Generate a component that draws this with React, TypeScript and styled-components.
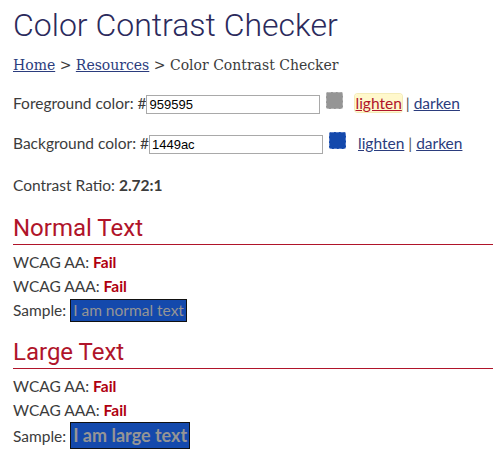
import styled, { createGlobalStyle } from "styled-components";

const GlobalStyle = createGlobalStyle`
  body {
    margin: 0;
    background: #fff;
    font-family: Lato, "Liberation Sans", sans-serif;
    color: #3c3c3c;
  }
`;

const Page = styled.main`
  padding: 0 0 0 13px;
`;

const Title = styled.h1`
  margin: 0;
  padding-top: 6px;
  font-family: Roboto, sans-serif;
  font-weight: 300;
  font-size: 32px;
  line-height: 38px;
  color: #2b2a5c;
`;

const Crumbs = styled.nav`
  margin-top: 13px;
  font-family: "DejaVu Serif", serif;
  font-size: 14px;
  color: #3c3c3c;
  a {
    color: #2b3c7d;
  }
`;

const FieldRow = styled.div<{ $top: number }>`
  display: flex;
  align-items: center;
  margin-top: ${(p) => p.$top}px;
  font-size: 15.5px;
  height: 22px;
`;

const HexInput = styled.input`
  width: 168px;
  height: 15px;
  padding: 1px 2px;
  margin: 3px 0 0 0;
  border: 1px solid #a9a9a9;
  font-family: "Liberation Sans", Arial, sans-serif;
  font-size: 13px;
  color: #000;
`;

const Swatch = styled.span<{ $color: string; $edge: string }>`
  width: 15px;
  height: 15px;
  margin: -6px 0 0 6px;
  border-radius: 2px;
  background: ${(p) => p.$color};
  border: 1px dashed ${(p) => p.$edge};
`;

const Links = styled.span`
  margin-left: 12px;
  color: #555;
  a {
    color: #2b3c7d;
  }
`;

const Focused = styled.a`
  && {
    color: #b0142a;
  }
  background: #fff8cc;
  border-radius: 3px;
  box-shadow: 0 0 0 1px #f4ecb8;
`;

const Ratio = styled.p`
  margin: 22px 0 0;
  font-size: 15.5px;
  b {
    font-weight: 700;
  }
`;

const Result = styled.section`
  margin-top: 19px;
  & + & {
    margin-top: 15px;
  }
`;

const SectionHead = styled.h2`
  margin: 0;
  font-family: Roboto, sans-serif;
  font-weight: 400;
  font-size: 24px;
  line-height: 31px;
  color: #b0142a;
  border-bottom: 1px solid #b0142a;
`;

const Line = styled.div`
  font-size: 15.5px;
  line-height: 24px;
  &:first-of-type {
    margin-top: 5px;
  }
`;

const Fail = styled.strong`
  color: #b00010;
`;

const Sample = styled.span<{ $large?: boolean }>`
  display: inline-block;
  background: #1449ac;
  color: #959595;
  border: 1px solid #111;
  padding: 0 2px;
  font-size: ${(p) => (p.$large ? "18px" : "15.5px")};
  font-weight: ${(p) => (p.$large ? 700 : 400)};
  line-height: ${(p) => (p.$large ? "25px" : "21px")};
`;

const Section = ({ title, large }: { title: string; large?: boolean }) => (
  <Result>
    <SectionHead>{title}</SectionHead>
    <Line>
      WCAG AA: <Fail>Fail</Fail>
    </Line>
    <Line>
      WCAG AAA: <Fail>Fail</Fail>
    </Line>
    <Line>
      Sample: <Sample $large={large}>{large ? "I am large text" : "I am normal text"}</Sample>
    </Line>
  </Result>
);

export default function App() {
  return (
    <Page>
      <GlobalStyle />
      <Title>Color Contrast Checker</Title>
      <Crumbs>
        <a href="#">Home</a> &gt; <a href="#">Resources</a> &gt; Color Contrast Checker
      </Crumbs>
      <FieldRow $top={19}>
        Foreground color: #<HexInput defaultValue="959595" />
        <Swatch $color="#959595" $edge="#b5b5b5" />
        <Links>
          <Focused href="#">lighten</Focused> | <a href="#">darken</a>
        </Links>
      </FieldRow>
      <FieldRow $top={18}>
        Background color: #<HexInput defaultValue="1449ac" />
        <Swatch $color="#1449ac" $edge="#5a7fc8" />
        <Links>
          <a href="#">lighten</a> | <a href="#">darken</a>
        </Links>
      </FieldRow>
      <Ratio>
        Contrast Ratio: <b>2.72:1</b>
      </Ratio>
      <Section title="Normal Text" />
      <Section title="Large Text" large />
    </Page>
  );
}
